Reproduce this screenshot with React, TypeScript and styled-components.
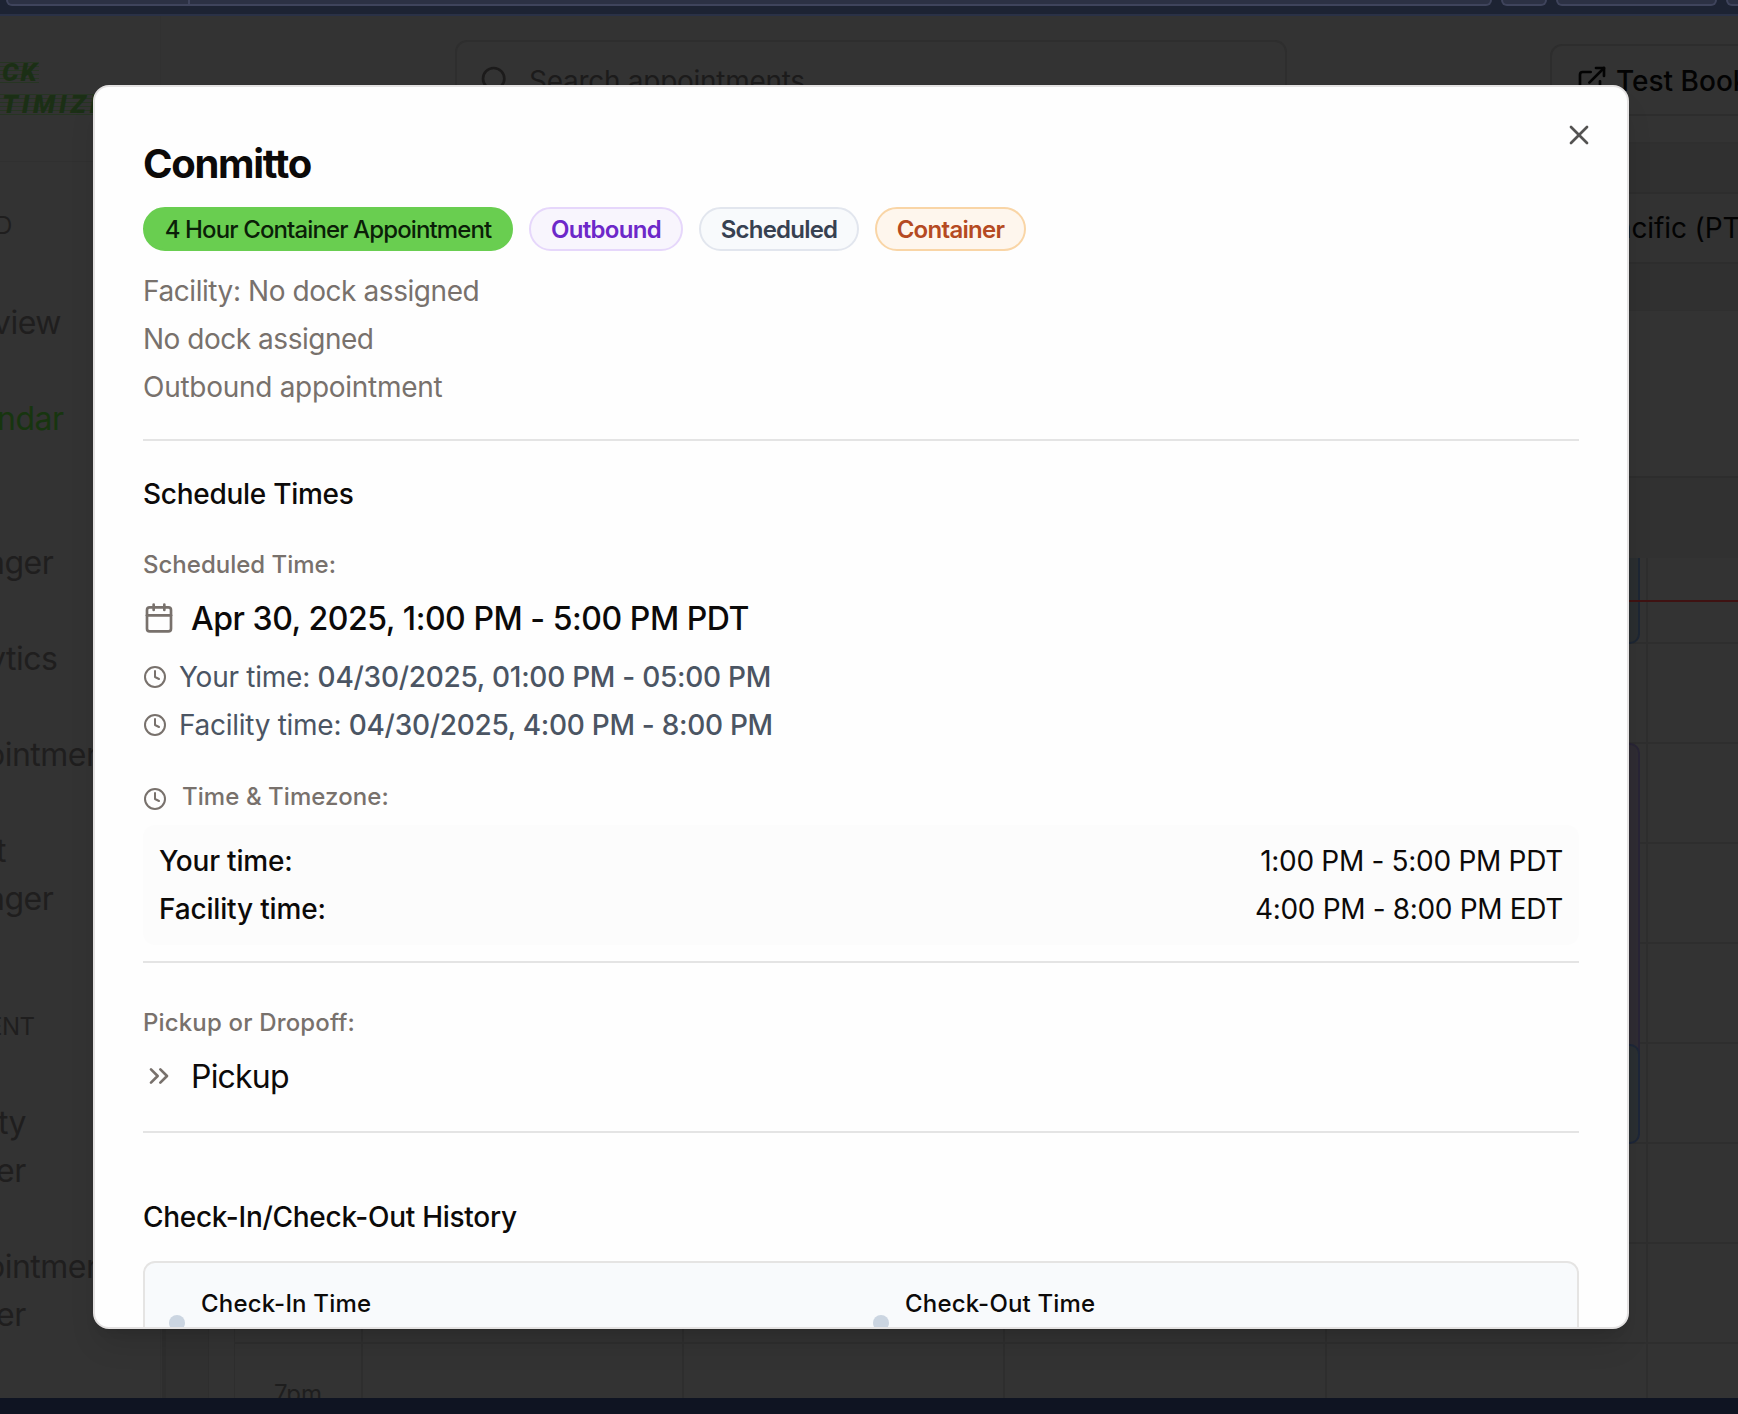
import React from "react";
import styled, { createGlobalStyle } from "styled-components";
import { Calendar, ChevronsRight, Clock, ExternalLink, Search, X } from "lucide-react";

const Global = createGlobalStyle`
  *, *::before, *::after { box-sizing: border-box; }
  html, body { margin: 0; padding: 0; }
  body { width: 1738px; height: 1414px; overflow: hidden; }
`;

const Screen = styled.div`
  position: relative;
  width: 1738px;
  height: 1414px;
  overflow: hidden;
  display: flex;
  flex-direction: column;
  background: #333333;
  color: #0c0a09;
  font-family: Inter, Roboto, sans-serif;
`;

/* ---------- browser chrome ---------- */

const ChromeBar = styled.div`
  flex: none;
  height: 16px;
  display: flex;
  gap: 9px;
  padding-left: 6px;
  background: #1d2333;
  border-bottom: 2px solid #2a3146;
  overflow: hidden;
`;

const ChromeField = styled.div<{ $w: number }>`
  flex: none;
  width: ${(p) => p.$w}px;
  height: 6px;
  display: flex;
  border: 2px solid #3f445c;
  border-top: 0;
  border-radius: 0 0 10px 10px;
  background: #2c3144;
`;

const ChromeTab = styled.span`
  width: 182px;
  border-right: 2px solid #3f445c;
`;

const ChromeFooter = styled.div`
  flex: none;
  height: 16px;
  background: #0f1422;
`;

/* ---------- page behind the dialog ---------- */

const Page = styled.div`
  flex: 1;
  min-height: 0;
  display: flex;
  overflow: hidden;
`;

const Sidebar = styled.aside`
  flex: none;
  width: 161px;
  overflow: hidden;
  border-right: 1px solid #313131;
  white-space: nowrap;
`;

const Brand = styled.div`
  display: flex;
  flex-direction: column;
  align-items: flex-start;
  gap: 11px;
  height: 146px;
  padding-top: 46px;
  border-bottom: 1px solid #303030;
  font-family: Roboto, Inter, sans-serif;
  font-size: 26px;
  font-style: italic;
  font-weight: 900;
  line-height: 21px;
  color: #1b2f15;
`;

const BrandLine = styled.div<{ $pad: number; $track: number }>`
  padding-left: ${(p) => p.$pad}px;
  letter-spacing: ${(p) => p.$track}px;
  background: repeating-linear-gradient(to bottom, #263522 0 1px, transparent 1px 4px);
`;

const NavText = styled.div<{ $top: number; $left: number; $size?: number; $active?: boolean }>`
  margin-top: ${(p) => p.$top}px;
  margin-left: ${(p) => p.$left}px;
  height: 48px;
  line-height: 48px;
  letter-spacing: -0.5px;
  font-size: ${(p) => p.$size ?? 32}px;
  color: ${(p) => (p.$active ? "#17350f" : "#1f1e1e")};
`;

const Main = styled.main`
  flex: 1;
  min-width: 0;
  display: flex;
  flex-direction: column;
`;

const Header = styled.header`
  flex: none;
  height: 128px;
  display: flex;
  align-items: flex-start;
  border-bottom: 2px solid #2f2f2f;
`;

const SearchBox = styled.div`
  flex: none;
  display: flex;
  align-items: center;
  gap: 18px;
  width: 832px;
  height: 80px;
  margin: 24px 0 0 294px;
  padding-left: 22px;
  border: 2px solid #2e2e2e;
  border-radius: 12px;
  color: #1c1b1b;
  font-size: 28px;
  line-height: 36px;
  letter-spacing: -0.28px;
  span { padding-top: 2px; }
`;

const OutlineButton = styled.div`
  flex: none;
  display: flex;
  align-items: center;
  gap: 8px;
  width: 300px;
  height: 72px;
  margin: 28px 0 0 263px;
  padding-left: 24px;
  border: 2px solid #2d2d2d;
  border-radius: 12px;
  color: #030303;
  font-size: 28px;
  font-weight: 500;
  line-height: 36px;
  white-space: nowrap;
  span { padding-top: 2px; }
`;

const Toolbar = styled.div`
  flex: none;
  height: 167px;
  padding-top: 48px;
  background: #303030;
  border-bottom: 1px solid #2f2f2f;
`;

const ZoneSelect = styled.div`
  height: 72px;
  padding-left: 1437px;
  border-top: 2px solid #2d2d2d;
  border-bottom: 2px solid #2d2d2d;
  background: #323232;
  color: #030303;
  font-size: 28px;
  line-height: 69px;
  letter-spacing: -0.1px;
  white-space: nowrap;
`;

const CalendarArea = styled.div`
  position: relative;
  flex: 1;
  min-height: 0;
  margin-left: 1px;
  padding-left: 42px;
  border-left: 4px solid #2e2e2e;
  background: #313131;
`;

const CalendarPanel = styled.div`
  height: 100%;
  padding: 165px 0 0 25px;
  border-left: 1px solid #2e2e2e;
  background: #333333;
`;

const CalendarHead = styled.div`
  height: 82px;
  border-top: 2px solid #2d2d2d;
  background: #313131;
`;

const CalendarGrid = styled.div`
  display: grid;
  grid-template-columns: 128px 321px 321px 322px 321px 1fr;
  grid-template-rows: 86px repeat(7, 100px) 100px;
  height: 840px;
  overflow: hidden;
  border-left: 1px solid #2e2e2e;
`;

const Cell = styled.div<{ $last: boolean }>`
  border-right: ${(p) => (p.$last ? 0 : 2)}px solid #2e2e2e;
  border-bottom: 2px solid #2e2e2e;
  padding: 34px 39px 0 0;
  font-size: 24px;
  line-height: 32px;
  text-align: right;
  color: #1e1e1e;
`;

const EventBlock = styled.div<{ $top: number; $height: number; $fill: string; $edge: string; $open?: boolean }>`
  position: absolute;
  left: 1160px;
  width: 314px;
  top: ${(p) => p.$top}px;
  height: ${(p) => p.$height}px;
  border: 2px solid ${(p) => p.$edge};
  border-radius: ${(p) => (p.$open ? "0 0 10px 10px" : "10px")};
  border-top-width: ${(p) => (p.$open ? 0 : 2)}px;
  background: ${(p) => p.$fill};
`;

const NowLine = styled.div`
  position: absolute;
  left: 1150px;
  right: 0;
  top: 289px;
  height: 2px;
  background: #3f1212;
`;

/* ---------- dialog ---------- */

const Dialog = styled.section`
  position: absolute;
  left: 93px;
  top: 85px;
  width: 1536px;
  height: 1244px;
  padding: 57px 48px 0;
  border: 2px solid #e4e2e2;
  border-radius: 16px;
  background: #fefefe;
  overflow: hidden;
  box-shadow: 0 20px 30px -6px rgba(0, 0, 0, 0.12), 0 8px 12px -8px rgba(0, 0, 0, 0.12);
`;

const CloseButton = styled.button`
  position: absolute;
  top: 32px;
  right: 32px;
  width: 32px;
  height: 32px;
  padding: 0;
  border: 0;
  background: none;
  color: #545352;
`;

const Title = styled.h2`
  margin: 0;
  height: 40px;
  font-size: 40px;
  font-weight: 650;
  line-height: 40px;
  letter-spacing: -1.3px;
`;

const Badges = styled.div`
  display: flex;
  gap: 16px;
  margin-top: 23px;
`;

const Badge = styled.span<{ $bg: string; $fg: string; $edge: string; $w: number; $weight: number; $track: number }>`
  display: flex;
  align-items: center;
  justify-content: center;
  width: ${(p) => p.$w}px;
  height: 44px;
  border: 2px solid ${(p) => p.$edge};
  border-radius: 22px;
  background: ${(p) => p.$bg};
  color: ${(p) => p.$fg};
  font-size: 24px;
  font-weight: ${(p) => p.$weight};
  letter-spacing: ${(p) => p.$track}px;
  white-space: nowrap;
`;

const Muted = styled.div`
  display: flex;
  flex-direction: column;
  gap: 8px;
  margin-top: 20px;
  padding-bottom: 32px;
  border-bottom: 2px solid #e4e4e4;
  color: #78716c;
  font-size: 28px;
  line-height: 41px;
  span { height: 40px; }
`;

const T = styled.span<{ $track: number }>`
  letter-spacing: ${(p) => p.$track}px;
`;

const Strong = styled(T)`
  font-weight: 500;
`;

const SectionTitle = styled.h3<{ $top: number }>`
  margin: ${(p) => p.$top}px 0 0;
  font-size: 28px;
  font-weight: 500;
  line-height: 40px;
  letter-spacing: -0.28px;
`;

const Label = styled.div<{ $top: number }>`
  display: flex;
  align-items: center;
  gap: 15px;
  margin-top: ${(p) => p.$top}px;
  height: 32px;
  color: #78716c;
  font-size: 24px;
  font-weight: 500;
  line-height: 32px;
  svg { margin-top: 4px; }
`;

const Value = styled.div<{ $medium?: boolean }>`
  display: flex;
  align-items: center;
  gap: 16px;
  height: 48px;
  margin-top: 13px;
  font-size: 32px;
  font-weight: ${(p) => (p.$medium ? 500 : 400)};
  svg { color: #78716c; }
`;

const ZoneRow = styled.div<{ $top: number }>`
  display: flex;
  align-items: center;
  gap: 12px;
  height: 40px;
  margin-top: ${(p) => p.$top}px;
  color: #4b5563;
  font-size: 28px;
  white-space: pre;
  svg { color: #78716c; }
`;

const ZoneBox = styled.div`
  display: flex;
  flex-direction: column;
  gap: 8px;
  margin-top: 12px;
  padding: 16px;
  border-radius: 12px;
  background: #fcfcfc;
  font-size: 28px;
  line-height: 41px;
`;

const ZoneLine = styled.div`
  display: flex;
  justify-content: space-between;
  height: 40px;
`;

const Rule = styled.hr<{ $top: number }>`
  height: 2px;
  margin: ${(p) => p.$top}px 0 0;
  border: 0;
  background: #e4e4e4;
`;

const History = styled.div`
  display: grid;
  grid-template-columns: 1fr 1fr;
  column-gap: 24px;
  margin-top: 24px;
  height: 160px;
  padding: 24px;
  border: 2px solid #e5e4e3;
  border-radius: 12px;
  background: #f8fafc;
`;

const HistoryItem = styled.div`
  display: flex;
  align-items: center;
  gap: 16px;
  height: 72px;
`;

const Dot = styled.span`
  width: 16px;
  height: 16px;
  border-radius: 50%;
  background: #cbd5e1;
`;

const HistoryName = styled.div`
  height: 72px;
  font-size: 24px;
  font-weight: 550;
  line-height: 34px;
  letter-spacing: 0.18px;
`;

const columns = [0, 1, 2, 3, 4, 5];
const rows = [0, 1, 2, 3, 4, 5, 6, 7, 8];

export default function App() {
  return (
    <Screen>
      <Global />
      <ChromeBar>
        <ChromeField $w={1486}><ChromeTab /></ChromeField>
        <ChromeField $w={46} />
        <ChromeField $w={161} />
        <ChromeField $w={46} />
      </ChromeBar>
      <Page>
        <Sidebar>
          <Brand>
            <BrandLine $pad={2} $track={2}>CK</BrandLine>
            <BrandLine $pad={2} $track={3.8}>TIMIZE</BrandLine>
          </Brand>
          <NavText $top={40} $left={-5} $size={24}>D</NavText>
          <NavText $top={49} $left={-7}>view</NavText>
          <NavText $top={48} $left={-3} $active>ndar</NavText>
          <NavText $top={96} $left={-13}>ager</NavText>
          <NavText $top={48} $left={-12}>ytics</NavText>
          <NavText $top={48} $left={-14}>ointments</NavText>
          <NavText $top={48} $left={-4}>t</NavText>
          <NavText $top={0} $left={-13}>ager</NavText>
          <NavText $top={80} $left={-12} $size={24}>ENT</NavText>
          <NavText $top={48} $left={-2}>ty</NavText>
          <NavText $top={0} $left={-4}>er</NavText>
          <NavText $top={48} $left={-14}>ointments</NavText>
          <NavText $top={0} $left={-4}>er</NavText>
        </Sidebar>
        <Main>
          <Header>
            <SearchBox><Search size={32} /><span>Search appointments...</span></SearchBox>
            <OutlineButton><ExternalLink size={32} /><span>Test Booking</span></OutlineButton>
          </Header>
          <Toolbar><ZoneSelect>Pacific (PT)</ZoneSelect></Toolbar>
          <CalendarArea>
            <CalendarPanel>
              <CalendarHead />
              <CalendarGrid>
                {rows.map((r) => columns.map((c) => (
                  <Cell key={`${r}-${c}`} $last={c === 5}>{r === 8 && c === 0 ? "7pm" : ""}</Cell>
                )))}
              </CalendarGrid>
            </CalendarPanel>
            <EventBlock $top={247} $height={86} $fill="#2a2e30" $edge="#1d2633" $open />
            <EventBlock $top={432} $height={330} $fill="#2f2c33" $edge="#282435" />
            <EventBlock $top={733} $height={100} $fill="#2a2f32" $edge="#1d2638" />
            <NowLine />
          </CalendarArea>
        </Main>
      </Page>
      <ChromeFooter />

      <Dialog>
        <CloseButton aria-label="Close"><X size={32} /></CloseButton>
        <Title>Conmitto</Title>
        <Badges>
          <Badge $w={370} $weight={450} $track={-0.88} $bg="#69ce50" $fg="#0b1f08" $edge="#69ce50">4 Hour Container Appointment</Badge>
          <Badge $w={154} $weight={560} $track={-0.7} $bg="#f8f5fd" $fg="#6d28c9" $edge="#e6d7fb">Outbound</Badge>
          <Badge $w={160} $weight={560} $track={-0.8} $bg="#f8fafc" $fg="#374151" $edge="#e2e6ee">Scheduled</Badge>
          <Badge $w={151} $weight={560} $track={-0.7} $bg="#fef6ed" $fg="#b54a22" $edge="#f9d5a6">Container</Badge>
        </Badges>
        <Muted>
          <T $track={-0.43}>Facility: No dock assigned</T>
          <T $track={-0.48}>No dock assigned</T>
          <T $track={-0.28}>Outbound appointment</T>
        </Muted>
        <SectionTitle $top={33}>Schedule Times</SectionTitle>
        <Label $top={35}><T $track={0}>Scheduled Time:</T></Label>
        <Value $medium><Calendar size={32} /><T $track={-0.45}>Apr 30, 2025, 1:00 PM - 5:00 PM PDT</T></Value>
        <ZoneRow $top={15}><Clock size={24} /><span><T $track={-0.25}>Your time: </T><Strong $track={-0.27}>04/30/2025, 01:00 PM - 05:00 PM</Strong></span></ZoneRow>
        <ZoneRow $top={8}><Clock size={24} /><span><T $track={-0.28}>Facility time: </T><Strong $track={-0.3}>04/30/2025, 4:00 PM - 8:00 PM</Strong></span></ZoneRow>
        <Label $top={36}><Clock size={24} /><T $track={0.07}>Time &amp; Timezone:</T></Label>
        <ZoneBox>
          <ZoneLine><Strong $track={-0.2}>Your time:</Strong><T $track={-0.3}>1:00 PM - 5:00 PM PDT</T></ZoneLine>
          <ZoneLine><Strong $track={-0.17}>Facility time:</Strong><T $track={-0.34}>4:00 PM - 8:00 PM EDT</T></ZoneLine>
        </ZoneBox>
        <Rule $top={16} />
        <Label $top={44}><T $track={0.16}>Pickup or Dropoff:</T></Label>
        <Value><ChevronsRight size={32} /><T $track={-0.8}>Pickup</T></Value>
        <Rule $top={31} />
        <SectionTitle $top={64}>Check-In/Check-Out History</SectionTitle>
        <History>
          <HistoryItem><Dot /><HistoryName>Check-In Time</HistoryName></HistoryItem>
          <HistoryItem><Dot /><HistoryName>Check-Out Time</HistoryName></HistoryItem>
        </History>
      </Dialog>
    </Screen>
  );
}
